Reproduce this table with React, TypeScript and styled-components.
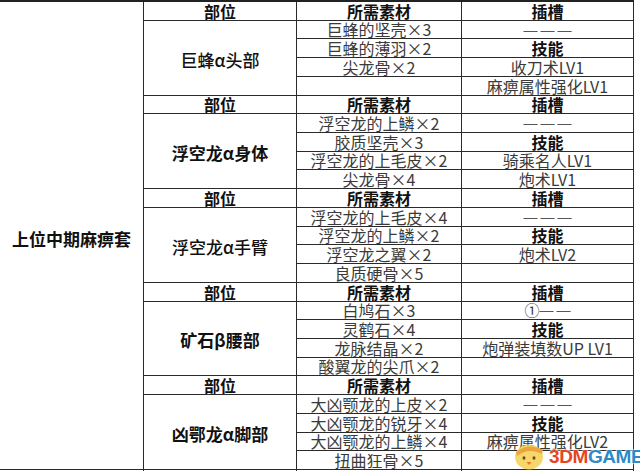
import React from "react";
import styled, { createGlobalStyle } from "styled-components";

const Global = createGlobalStyle`
  html, body { margin: 0; padding: 0; background: #fff; overflow: hidden; }
  body { font-family: "Noto Sans CJK SC", "Noto Sans", sans-serif; }
`;

const Page = styled.div`
  position: relative;
  width: 640px;
  height: 471px;
  overflow: hidden;
`;

const Grid = styled.div`
  display: grid;
  grid-template-columns: 144px 153px 165px 172px;
  grid-template-rows: repeat(26, 18.72px);
  width: 634px;
  border-top: 2px solid #222;
  box-sizing: border-box;
`;

const Cell = styled.div<{ $bold?: boolean; $gray?: boolean }>`
  box-sizing: border-box;
  border-right: 1px solid #2a2a2a;
  border-bottom: 1px solid #2a2a2a;
  display: flex;
  align-items: flex-end;
  justify-content: center;
  white-space: nowrap;
  overflow: visible;
  font-size: 16px;
  line-height: 18px;
  font-weight: ${(p) => (p.$bold ? 700 : 400)};
  color: ${(p) => (p.$gray ? "#3a3a3a" : "#111")};
`;

const SetCell = styled.div`
  grid-row: span 25;
  box-sizing: border-box;
  border-right: 1px solid #2a2a2a;
  border-bottom: 1px solid #2a2a2a;
  display: flex;
  align-items: center;
  justify-content: center;
  font-size: 17px;
  font-weight: 700;
  color: #111;
  padding-top: 7px;
`;

const EmptySet = styled.div`
  box-sizing: border-box;
  border-right: 1px solid #2a2a2a;
`;

const PartCell = styled.div<{ $bold?: boolean }>`
  grid-row: span 4;
  box-sizing: border-box;
  border-right: 1px solid #2a2a2a;
  border-bottom: 1px solid #2a2a2a;
  display: flex;
  align-items: center;
  justify-content: center;
  font-size: 17px;
  font-weight: ${(p) => (p.$bold ? 700 : 500)};
  color: #111;
  padding-top: 3px;
`;

const Dash = styled.span`
  font-family: "Liberation Sans", sans-serif;
  font-size: 14px;
  letter-spacing: 3px;
  margin-right: -3px;
  color: #555;
  align-self: center;
`;

const Circled = styled.span`
  font-size: 15px;
`;

const Watermark = styled.div`
  position: absolute;
  left: 512px;
  top: 439px;
  display: flex;
  align-items: flex-start;
`;

const Logo = styled.span`
  font-family: "Liberation Sans", Arial, sans-serif;
  font-weight: 700;
  font-size: 19px;
  line-height: 19px;
  letter-spacing: -0.4px;
  margin-left: 1px;
  margin-top: 8px;
  text-shadow: 0 0 2px #fff, 0 0 2px #fff, 0 0 1px #fff;
`;

const Red = styled.span`
  color: #e5461f;
`;
const Blue = styled.span`
  color: #2b8bc9;
`;

type Slot = { t: string; b?: boolean; dash?: boolean; circ?: boolean };
type Section = { name: string; bold: boolean; mats: string[]; slots: Slot[] };

const sections: Section[] = [
  {
    name: "巨蜂α头部",
    bold: false,
    mats: ["巨蜂的坚壳×3", "巨蜂的薄羽×2", "尖龙骨×2", ""],
    slots: [{ t: "———", dash: true }, { t: "技能", b: true }, { t: "收刀术LV1" }, { t: "麻痹属性强化LV1" }],
  },
  {
    name: "浮空龙α身体",
    bold: true,
    mats: ["浮空龙的上鳞×2", "胶质坚壳×3", "浮空龙的上毛皮×2", "尖龙骨×4"],
    slots: [{ t: "———", dash: true }, { t: "技能", b: true }, { t: "骑乘名人LV1" }, { t: "炮术LV1" }],
  },
  {
    name: "浮空龙α手臂",
    bold: false,
    mats: ["浮空龙的上毛皮×4", "浮空龙的上鳞×2", "浮空龙之翼×2", "良质硬骨×5"],
    slots: [{ t: "———", dash: true }, { t: "技能", b: true }, { t: "炮术LV2" }, { t: "" }],
  },
  {
    name: "矿石β腰部",
    bold: true,
    mats: ["白鸠石×3", "灵鹤石×4", "龙脉结晶×2", "酸翼龙的尖爪×2"],
    slots: [{ t: "——", circ: true }, { t: "技能", b: true }, { t: "炮弹装填数UP LV1" }, { t: "" }],
  },
  {
    name: "凶鄂龙α脚部",
    bold: true,
    mats: ["大凶颚龙的上皮×2", "大凶颚龙的锐牙×4", "大凶颚龙的上鳞×4", "扭曲狂骨×5"],
    slots: [{ t: "———", dash: true }, { t: "技能", b: true }, { t: "麻痹属性强化LV2" }, { t: "" }],
  },
];

const SlotText: React.FC<{ s: Slot }> = ({ s }) => {
  if (s.dash) return <Dash>{s.t}</Dash>;
  if (s.circ)
    return (
      <>
        <Circled>①</Circled>
        <Dash>{s.t}</Dash>
      </>
    );
  return <>{s.t}</>;
};

const Chick: React.FC = () => (
  <svg width="36" height="32" viewBox="0 0 36 32">
    <ellipse cx="17" cy="18" rx="14" ry="12.5" fill="#f6d45e" opacity="0.92" />
    <path d="M4 13 Q17 3 31 11 L30 15 Q17 8 5 17 Z" fill="#e8a13a" opacity="0.9" />
    <ellipse cx="12" cy="19" rx="1.5" ry="1.8" fill="#6b4a1a" />
    <ellipse cx="22" cy="19" rx="1.5" ry="1.8" fill="#6b4a1a" />
    <path d="M14.5 23 L17 26 L19.5 23 Z" fill="#e8762e" />
  </svg>
);

export default function App() {
  return (
    <Page>
      <Global />
      <Grid>
        <SetCell>上位中期麻痹套</SetCell>
        {sections.map((sec) => (
          <React.Fragment key={sec.name}>
            <Cell $bold>部位</Cell>
            <Cell $bold>所需素材</Cell>
            <Cell $bold>插槽</Cell>
            {sec.mats.map((m, i) => (
              <React.Fragment key={i}>
                {i === 0 && <PartCell $bold={sec.bold}>{sec.name}</PartCell>}
                <Cell $gray>{m}</Cell>
                <Cell $gray={!sec.slots[i].b} $bold={sec.slots[i].b}>
                  <SlotText s={sec.slots[i]} />
                </Cell>
              </React.Fragment>
            ))}
          </React.Fragment>
        ))}
        <EmptySet />
        <Cell $bold>部位</Cell>
        <Cell $bold>所需素材</Cell>
        <Cell $bold>插槽</Cell>
      </Grid>
      <Watermark>
        <Chick />
        <Logo>
          <Red>3DM</Red>
          <Blue>GAME</Blue>
        </Logo>
      </Watermark>
    </Page>
  );
}
